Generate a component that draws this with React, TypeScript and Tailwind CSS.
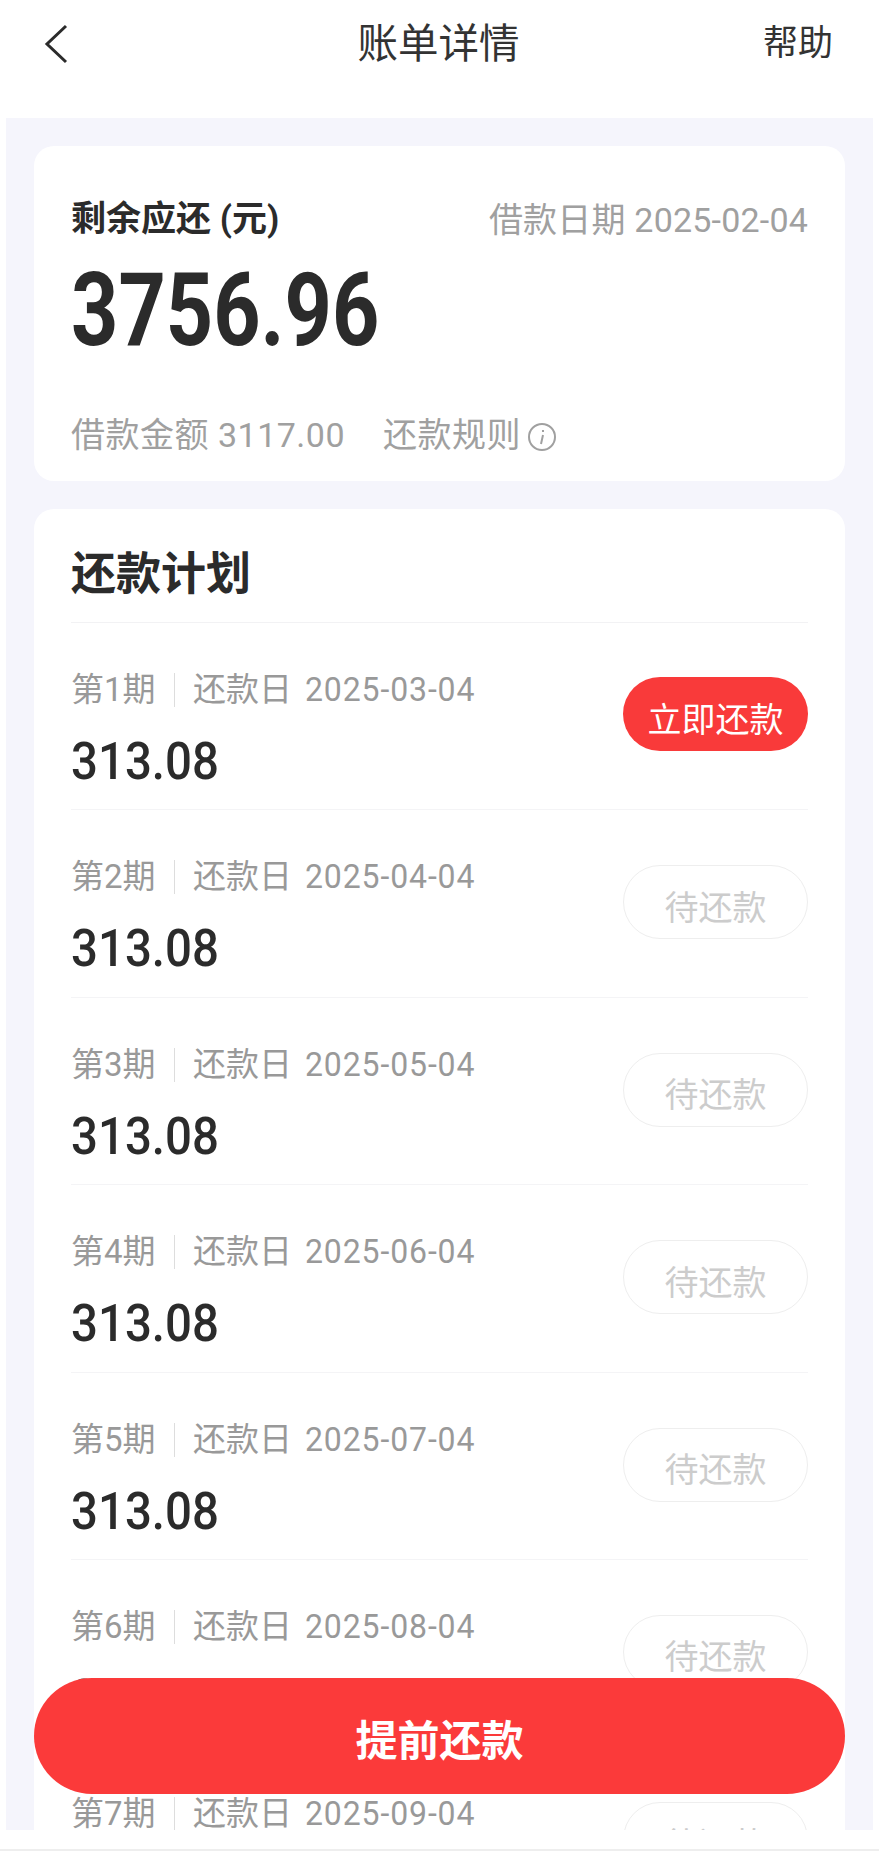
const cjk = "font-['Roboto','Noto_Sans_CJK_SC',sans-serif]";

const rows = [
  { n: 1, d: "2025-03-04", active: true },
  { n: 2, d: "2025-04-04" },
  { n: 3, d: "2025-05-04" },
  { n: 4, d: "2025-06-04" },
  { n: 5, d: "2025-07-04" },
  { n: 6, d: "2025-08-04" },
  { n: 7, d: "2025-09-04" },
];

function Row({ n, d, active }: { n: number; d: string; active?: boolean }) {
  return (
    <div className="flex h-[187.4px] shrink-0 items-start justify-between border-b border-[#f4f4f6]">
      <div className="flex flex-col pt-[47px]">
        <div className="flex h-[40px] items-center whitespace-nowrap text-[33px] leading-[40px] text-[#999999]">
          <span className="w-[103px] shrink-0 whitespace-nowrap">第{n}期</span>
          <span className="mr-[18px] h-[34px] w-px bg-[#dddddd]"></span>
          <span>还款日</span>
          <span className="ml-[13px] origin-left scale-x-[0.97] tracking-[0.9px]">{d}</span>
        </div>
        <div className="mt-[28px] origin-left scale-x-[0.93] text-[51px] font-medium leading-[48px] text-[#2b2b2b]">313.08</div>
      </div>
      {active ? (
        <div className="mt-[54px] flex h-[74px] w-[185px] items-center justify-center rounded-full bg-[#f93a3a] pt-[12px] text-[34px] text-white">
          立即还款
        </div>
      ) : (
        <div className="mt-[55px] flex h-[74px] w-[185px] items-center justify-center rounded-full border border-[#eeeeee] pt-[12px] text-[34px] text-[#cccccc]">
          待还款
        </div>
      )}
    </div>
  );
}

export default function App() {
  return (
    <div className={`relative h-[1852px] w-[879px] overflow-hidden bg-white ${cjk}`}>
      <header className="grid h-[118px] grid-cols-[1fr_auto_1fr] items-center pb-[30px] pl-[44px] pr-[46px]">
        <svg width="24" height="40" viewBox="0 0 24 40" fill="none" stroke="#2b2b2b" strokeWidth="3">
          <path d="M22 2 L3 20 L22 38" />
        </svg>
        <div className="text-[40.5px] text-[#333333]">账单详情</div>
        <div className="justify-self-end text-[35px] text-[#333333]">帮助</div>
      </header>
      <main className="mx-[6px] flex h-[1712px] flex-col gap-[28px] overflow-hidden bg-[#f5f5fc] px-[28px] pt-[28px]">
        <section className="flex h-[335px] shrink-0 flex-col rounded-[20px] bg-white px-[37px]">
          <div className="mt-[54px] flex items-center justify-between">
            <div className="text-[35px] font-bold leading-[40px] text-[#2b2b2b]">剩余应还 (元)</div>
            <div className="whitespace-nowrap text-[34px] leading-[40px] tracking-[0.2px] text-[#a0a0a0]">借款日期 2025-02-04</div>
          </div>
          <div className="mt-[20px] origin-left scale-x-[0.81] text-[102px] font-bold leading-[100px] text-[#2b2b2b]">
            3756.96
          </div>
          <div className="mt-[55px] flex items-center text-[34px] leading-[40px] tracking-[0.5px] text-[#a0a0a0]">
            <span>借款金额 3117.00</span>
            <span className="ml-[38px]">还款规则</span>
            <svg className="ml-[7px] mt-[3px]" width="28" height="28" viewBox="0 0 28 28" fill="none" stroke="#a0a0a0" strokeWidth="2">
              <circle cx="14" cy="14" r="13" />
              <path d="M15 12 L13 21 M15 7 L15 9" />
            </svg>
          </div>
        </section>
        <section className="flex-1 overflow-hidden rounded-t-[20px] bg-white px-[37px]">
          <div className="flex h-[114px] items-center border-b border-[#f2f2f4] pt-[18px] text-[45px] font-bold text-[#2b2b2b]">还款计划</div>
          <div className="flex flex-col">
            {rows.map((r) => (
              <Row key={r.n} {...r} />
            ))}
          </div>
        </section>
      </main>
      <div className="h-[21px] border-b-2 border-[#eeeeee]"></div>
      <button className="absolute left-[34px] top-[1678px] flex h-[116px] w-[811px] items-center justify-center rounded-full bg-[#fb3a3a] pt-[10px] text-[42px] font-bold text-white">
        提前还款
      </button>
    </div>
  );
}
